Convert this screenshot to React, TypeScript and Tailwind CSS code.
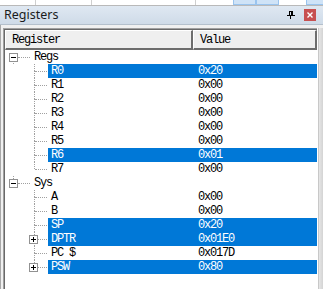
const mono = { fontFamily: '"Liberation Mono", "DejaVu Sans Mono", monospace' };

type Row = {
  label: string;
  value?: string;
  level: 0 | 1;
  selected?: boolean;
  box?: "minus" | "plus";
  last?: boolean;
  lineBelow?: boolean;
};

const rows: Row[] = [
  { label: "Regs", level: 0, box: "minus" },
  { label: "R0", value: "0x20", level: 1, selected: true },
  { label: "R1", value: "0x00", level: 1 },
  { label: "R2", value: "0x00", level: 1 },
  { label: "R3", value: "0x00", level: 1 },
  { label: "R4", value: "0x00", level: 1 },
  { label: "R5", value: "0x00", level: 1 },
  { label: "R6", value: "0x01", level: 1, selected: true },
  { label: "R7", value: "0x00", level: 1, last: true },
  { label: "Sys", level: 0, box: "minus", last: true },
  { label: "A", value: "0x00", level: 1 },
  { label: "B", value: "0x00", level: 1 },
  { label: "SP", value: "0x20", level: 1, selected: true },
  { label: "DPTR", value: "0x01E0", level: 1, selected: true, box: "plus" },
  { label: "PC $", value: "0x017D", level: 1 },
  { label: "PSW", value: "0x80", level: 1, selected: true, box: "plus", last: true },
];

function Box({ kind }: { kind: "minus" | "plus" }) {
  return (
    <div className="w-[9px] h-[9px] border border-[#919191] bg-white flex items-center justify-center z-10">
      <svg width="7" height="7" viewBox="0 0 7 7">
        <rect x="1" y="3" width="5" height="1" fill="#000" />
        {kind === "plus" && <rect x="3" y="1" width="1" height="5" fill="#000" />}
      </svg>
    </div>
  );
}

function TreeRow({ r }: { r: Row }) {
  const dot = "border-[#a0a0a0] border-dotted";
  return (
    <div className="flex h-[14px] text-[12px] leading-[14px] tracking-[-1.2px]" style={mono}>
      <div className="relative flex w-[187px] shrink-0">
        {/* root vertical line */}
        {r.level === 0 ? (
          <div className="relative w-[26px] shrink-0">
            <div className={`absolute left-[8px] top-0 h-[7px] border-l ${dot} ${r.label === "Regs" ? "hidden" : ""}`} />
            {!r.last && <div className={`absolute left-[8px] top-[7px] h-[7px] border-l ${dot}`} />}
            <div className={`absolute left-[13px] top-[7px] w-[12px] border-t ${dot}`} />
            <div className="absolute left-[4px] top-[3px]">
              <Box kind={r.box ?? "minus"} />
            </div>
          </div>
        ) : (
          <div className="relative w-[43px] shrink-0">
            <div className={`absolute left-[29px] top-0 h-[7px] border-l ${dot}`} />
            {!r.last && <div className={`absolute left-[29px] top-[7px] h-[7px] border-l ${dot}`} />}
            <div className={`absolute left-[30px] top-[7px] w-[12px] border-t ${dot}`} />
            {r.box && (
              <div className="absolute left-[24px] top-[3px]">
                <Box kind={r.box} />
              </div>
            )}
          </div>
        )}
        <div
          className={`flex-1 pl-[3px] ${r.selected ? "bg-[#0078d7] text-white" : "text-black"}`}
        >
          {r.label}
        </div>
      </div>
      <div className={`flex-1 pl-[6px] ${r.selected ? "bg-[#0078d7] text-white" : "text-black"}`}>
        {r.value ?? ""}
      </div>
    </div>
  );
}

export default function App() {
  return (
    <div className="w-[323px] h-[289px] overflow-hidden flex flex-col bg-[#f0f0f0]">
      {/* partial toolbar strip */}
      <div className="h-[6px] flex bg-white border-b border-[#b9b9b9]">
        <div className="w-[36px] border-r border-[#cfcfcf]" />
        <div className="w-[56px] border-r border-[#cfcfcf]" />
        <div className="w-[104px] border-r border-[#cfcfcf]" />
        <div className="w-[37px]" />
        <div className="w-[23px] bg-[#cfe3f7] border border-t-0 border-[#9ac4ee]" />
        <div className="w-[23px] bg-[#cfe3f7] border border-t-0 border-[#9ac4ee]" />
        <div className="w-[27px]" />
        <div className="flex-1 bg-[#cfe3f7] border border-t-0 border-r-0 border-[#9ac4ee]" />
      </div>

      {/* title bar */}
      <div className="h-[19px] flex items-center bg-gradient-to-b from-[#dfe8f2] to-[#cfdbe8] border-b border-[#b4c0cc]">
        <span
          className="pl-[4px] text-[12.5px] text-[#1b1b1b]"
          style={{ fontFamily: '"Noto Sans", "Liberation Sans", sans-serif' }}
        >
          Registers
        </span>
        <div className="flex-1" />
        <svg width="8" height="8" viewBox="0 0 8 8" className="mr-[9px]">
          <rect x="2" y="0" width="4" height="1" fill="#000" />
          <rect x="2" y="0" width="1" height="5" fill="#000" />
          <rect x="5" y="0" width="1" height="5" fill="#000" />
          <rect x="4" y="0" width="1" height="5" fill="#000" />
          <rect x="0" y="4" width="8" height="1" fill="#000" />
          <rect x="3" y="5" width="1" height="3" fill="#000" />
        </svg>
        <div className="w-[12px] h-[12px] bg-[#c75050] mr-[7px] flex items-center justify-center">
          <svg width="6" height="6" viewBox="0 0 6 6">
            <path d="M0.5 0.5 L5.5 5.5 M5.5 0.5 L0.5 5.5" stroke="#fff" strokeWidth="1.4" />
          </svg>
        </div>
      </div>

      {/* body */}
      <div className="flex-1 flex pt-[3px] border-l border-[#a8a8a8] pl-[2px] min-h-0">
        <div className="flex-1 flex flex-col border-t border-l border-[#a0a0a0] min-h-0">
          <div className="flex-1 flex flex-col border-t border-l border-[#696969] bg-white min-h-0">
            {/* header */}
            <div
              className="flex h-[20px] text-[12px] tracking-[-1.2px] text-black shrink-0"
              style={mono}
            >
              <div className="w-[188px] flex items-center pl-[6px] bg-[#efefef] border-t border-l border-white border-b-2 border-r-2 border-b-[#6d6d6d] border-r-[#6d6d6d]">
                Register
              </div>
              <div className="flex-1 flex items-center pl-[6px] bg-[#efefef] border-t border-l border-white border-b-2 border-r-2 border-b-[#6d6d6d] border-r-[#6d6d6d]">
                Value
              </div>
            </div>
            <div className="flex flex-col">
              {rows.map((r, i) => (
                <TreeRow key={i} r={r} />
              ))}
            </div>
          </div>
        </div>
        {/* right edge */}
        <div className="w-[6px] flex">
          <div className="w-[1px] bg-[#ffffff]" />
          <div className="w-[1px] bg-[#c8c8c8]" />
          <div className="flex-1 bg-gradient-to-r from-[#e6e6e6] to-[#d4d4d4]" />
        </div>
      </div>
    </div>
  );
}
